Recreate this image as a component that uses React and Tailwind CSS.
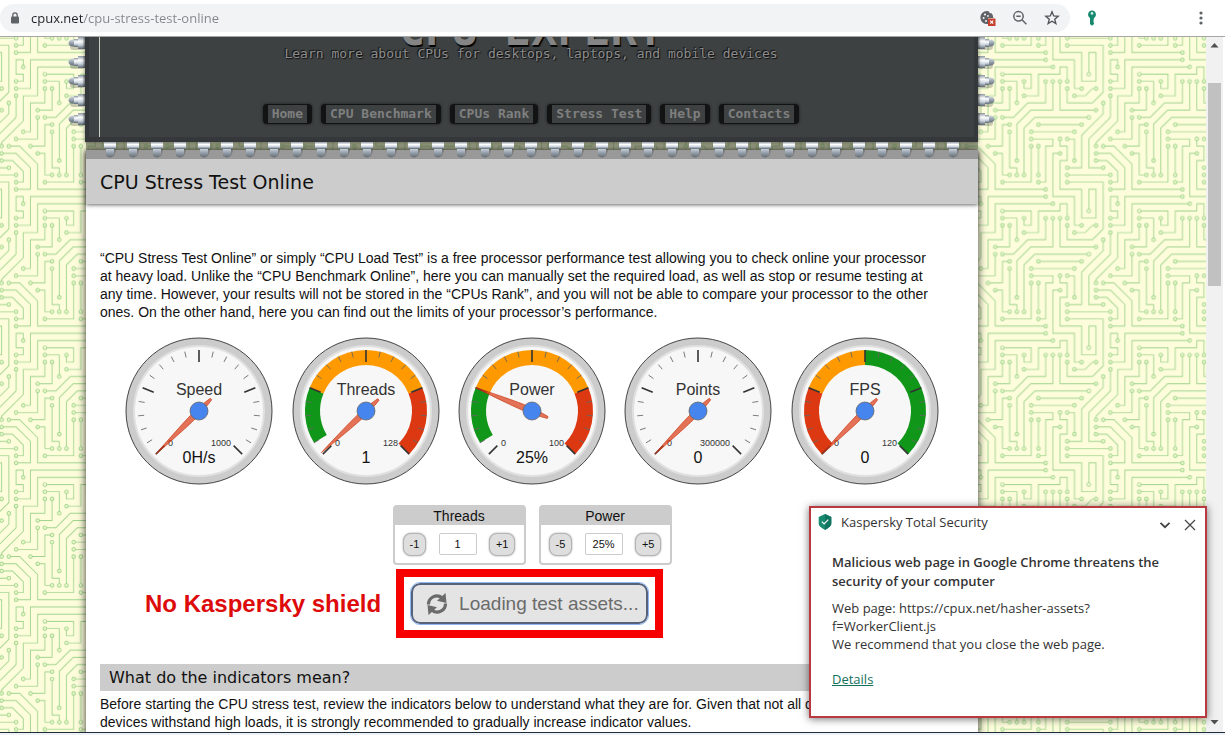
import React from 'react';

const CIRCUIT =
  'M44.1 224a5 5 0 1 1 0 2H0v-2h44.1zm160 48a5 5 0 1 1 0 2H82v-2h122.1zm57.8-46a5 5 0 1 1 0-2H304v2h-42.1zm0 16a5 5 0 1 1 0-2H304v2h-42.1zm6.2-114a5 5 0 1 1 0 2h-86.2a5 5 0 1 1 0-2h86.2zm-256-48a5 5 0 1 1 0 2H0v-2h12.1zm185.8 34a5 5 0 1 1 0-2h86.2a5 5 0 1 1 0 2h-86.2zM258 12.1a5 5 0 1 1-2 0V0h2v12.1zm-64 208a5 5 0 1 1-2 0v-54.2a5 5 0 1 1 2 0v54.2zm48-198.2V80h62v2h-64V21.9a5 5 0 1 1 2 0zm16 16V64h46v2h-48V37.9a5 5 0 1 1 2 0zm-128 96V208h16v12.1a5 5 0 1 1-2 0V210h-16v-76.1a5 5 0 1 1 2 0zm-5.9-21.9a5 5 0 1 1 0 2H114v48H85.9a5 5 0 1 1 0-2H112v-48h12.1zm-6.2 130a5 5 0 1 1 0-2H176v-74.1a5 5 0 1 1 2 0V242h-60.1zm-16-64a5 5 0 1 1 0-2H114v48h10.1a5 5 0 1 1 0 2H112v-48h-10.1zM66 284.1a5 5 0 1 1-2 0V274H50v30h-2v-32h18v12.1zM236.1 176a5 5 0 1 1 0 2H226v94h48v32h-2v-30h-48v-98h12.1zm25.8-30a5 5 0 1 1 0-2H274v44.1a5 5 0 1 1-2 0V146h-10.1zm-64 96a5 5 0 1 1 0-2H208v-80h16v-14h-42.1a5 5 0 1 1 0-2H226v18h-16v80h-12.1zm86.2-210a5 5 0 1 1 0 2H272V0h2v32h10.1zM98 101.9V146H53.9a5 5 0 1 1 0-2H96v-42.1a5 5 0 1 1 2 0zM53.9 34a5 5 0 1 1 0-2H80V0h2v34H53.9zm60.1 3.9V66H82v64H69.9a5 5 0 1 1 0-2H80V64h32V37.9a5 5 0 1 1 2 0zM101.9 82a5 5 0 1 1 0-2H128V37.9a5 5 0 1 1 2 0V82h-28.1zm16-64a5 5 0 1 1 0-2H146v44.1a5 5 0 1 1-2 0V18h-26.1zm102.2 270a5 5 0 1 1 0 2H98v14h-2v-16h124.1zM242 149.9V160h16v34h-16v62h48v48h-2v-46h-48v-66h16v-30h-16v-12.1a5 5 0 1 1 2 0zM53.9 18a5 5 0 1 1 0-2H64V2H48V0h18v18H53.9zm112 32a5 5 0 1 1 0-2H192V0h50v2h-48v48h-28.1zm-48-48a5 5 0 0 1-9.8-2h2.07a3 3 0 1 0 5.66 0H178v34h-18V21.9a5 5 0 1 1 2 0V32h14V2h-58.1zm0 96a5 5 0 1 1 0-2H137l32-32h39V21.9a5 5 0 1 1 2 0V66h-40.17l-32 32H117.9zm28.1 90.1a5 5 0 1 1-2 0v-76.51L175.59 80H224V21.9a5 5 0 1 1 2 0V82h-49.59L146 112.41v75.69zm16 32a5 5 0 1 1-2 0v-99.51L184.59 96H300.1a5 5 0 0 1 3.9-3.9v2.07a3 3 0 0 0 0 5.66v2.07a5 5 0 0 1-3.9-3.9H185.41L162 121.41v98.69zm-144-64a5 5 0 1 1-2 0v-3.51l48-48V48h32V0h2v50H66v55.41l-48 48v2.69zM50 53.9v43.51l-48 48V208h26.1a5 5 0 1 1 0 2H0v-65.41l48-48V53.9a5 5 0 1 1 2 0zm-16 16V89.41l-34 34v-2.82l32-32V69.9a5 5 0 1 1 2 0zM12.1 32a5 5 0 1 1 0 2H9.41L0 43.41V40.6L8.59 32h3.51zm265.8 18a5 5 0 1 1 0-2h18.69l7.41-7.41v2.82L297.41 50H277.9zm-16 160a5 5 0 1 1 0-2H288v-71.41l16-16v2.82l-14 14V210h-28.1zm-208 32a5 5 0 1 1 0-2H64v-22.59L40.59 194H21.9a5 5 0 1 1 0-2H41.41L66 216.59V242H53.9zm150.2 14a5 5 0 1 1 0 2H96v-56.6L56.6 162H37.9a5 5 0 1 1 0-2h19.5L98 200.6V256h106.1zm-150.2 2a5 5 0 1 1 0-2H80v-46.59L48.59 178H21.9a5 5 0 1 1 0-2H49.41L82 208.59V258H53.9zM34 39.8v1.61L9.41 66H0v-2h8.59L32 40.59V0h2v39.8zM2 300.1a5 5 0 0 1 3.9 3.9H3.83A3 3 0 0 0 0 302.17V256h18v48h-2v-46H2v42.1zM34 241v63h-2v-62H0v-2h34v1zM17 18H0v-2h16V0h2v18h-1zm273-2h14v2h-16V0h2v16zm-32 273v15h-2v-14h-14v14h-2v-16h18v1zM0 92.1A5.02 5.02 0 0 1 6 97a5 5 0 0 1-6 4.9v-2.07a3 3 0 1 0 0-5.66V92.1zM80 272h2v32h-2v-32zm37.9 32h-2.07a3 3 0 0 0-5.66 0h-2.07a5 5 0 0 1 9.8 0zM5.9 0A5.02 5.02 0 0 1 0 5.9V3.83A3 3 0 0 0 3.83 0H5.9zm294.2 0h2.07A3 3 0 0 0 304 3.83V5.9a5 5 0 0 1-3.9-5.9zm3.9 300.1v2.07a3 3 0 0 0-1.83 1.83h-2.07a5 5 0 0 1 3.9-3.9z';

// Column/row of every solder pad on the 19 x 19 board grid.
const PADS = [
  [3, 14], [13, 17], [16, 14], [16, 15], [17, 8], [11, 8], [1, 5], [12, 7], [18, 7], [16, 1], [12, 14], [12, 10],
  [15, 1], [16, 2], [8, 8], [9, 14], [8, 7], [5, 10], [7, 15], [11, 10], [6, 11], [8, 14], [4, 18], [15, 11],
  [16, 9], [17, 12], [12, 15], [11, 9], [18, 2], [6, 6], [3, 9], [3, 2], [7, 2], [4, 8], [6, 5], [8, 2], [7, 1],
  [9, 4], [14, 18], [15, 9], [3, 1], [10, 3], [10, 1], [7, 6], [13, 1], [9, 12], [14, 1], [10, 14], [1, 10],
  [3, 3], [2, 13], [2, 4], [1, 2], [17, 3], [16, 13], [3, 15], [1, 12], [13, 16], [2, 10], [3, 16], [1, 11],
];

function CircuitBackground() {
  return (
    <svg className="absolute inset-0 h-full w-full" aria-hidden="true">
      <defs>
        <pattern
          id="circuit"
          width="304"
          height="304"
          patternUnits="userSpaceOnUse"
          patternTransform="translate(-6 36.7) scale(0.45)"
        >
          <path d={CIRCUIT} fill="#9fd38d" />
          {PADS.map(([c, r]) => (
            <circle key={c + '-' + r} cx={c * 16 + 1} cy={r * 16 + 1} r="3" fill="#e9f8c8" />
          ))}
        </pattern>
      </defs>
      <rect width="100%" height="100%" fill="#fdfddc" />
      <rect width="100%" height="100%" fill="url(#circuit)" />
    </svg>
  );
}

function Toolbar() {
  return (
    <header className="flex h-[37px] shrink-0 items-center border-b border-[#a6a6a6] bg-white font-['Open_Sans','Noto_Sans',sans-serif]">
      <div className="flex h-7 flex-1 items-center rounded-full bg-[#f1f3f4] pl-2.5 pr-2.5">
        <svg className="h-3 w-[10px]" viewBox="0 0 10 12" aria-hidden="true">
          <rect x="1" y="4.5" width="8" height="7" rx="1" fill="#5f6368" />
          <path d="M2.8 5V3a2.2 2.2 0 0 1 4.4 0v2" fill="none" stroke="#5f6368" strokeWidth="1.3" />
        </svg>
        <input
          aria-label="Address"
          className="ml-[11px] h-6 flex-1 bg-[linear-gradient(90deg,#202124_52px,#80868b_52px)] bg-clip-text text-[13px] text-transparent outline-none"
          defaultValue="cpux.net/cpu-stress-test-online"
        />
        <div className="flex items-center gap-4">
          <button aria-label="Cookies blocked" className="block">
            <svg className="h-4 w-4" viewBox="0 0 16 16">
              <path d="M7 1a6.5 6.5 0 1 0 1 12.9V8h5.4A6.5 6.5 0 0 0 11.5 3.3 2.2 2.2 0 0 1 9 1.4 6.5 6.5 0 0 0 7 1z" fill="#5f6368" />
              <circle cx="5" cy="4.5" r="1.1" fill="#f1f3f4" />
              <circle cx="3.6" cy="8" r="1" fill="#f1f3f4" />
              <circle cx="8" cy="6" r="0.9" fill="#f1f3f4" />
              <circle cx="6" cy="11" r="1" fill="#f1f3f4" />
              <rect x="8" y="8.5" width="7.5" height="7.5" fill="#c5402f" />
              <path d="M10.2 10.7l3 3m0-3l-3 3" stroke="#fff" strokeWidth="1.1" />
            </svg>
          </button>
          <button aria-label="Zoom" className="block">
            <svg className="h-4 w-4" viewBox="0 0 16 16" fill="none" stroke="#5f6368" strokeWidth="1.5">
              <circle cx="6.5" cy="6.3" r="4.7" />
              <path d="M10 9.8l4.400 4.400M4.300 6.300h4.400" />
            </svg>
          </button>
          <button aria-label="Bookmark this page" className="block">
            <svg className="h-4 w-4" viewBox="0 0 16 16" fill="none" stroke="#4f5357" strokeWidth="1.3">
              <path d="M8 1.8l1.700 4.200 4.500.3-3.500 2.900 1.200 4.400L8 11.200l-3.900 2.400 1.200-4.400L1.800 6.300l4.500-.3z" />
            </svg>
          </button>
        </div>
      </div>
      <div className="flex w-[155px] items-center justify-between pl-4 pr-4">
        <button aria-label="Password manager" className="block">
          <svg className="h-4 w-3" viewBox="0 0 12 16">
            <path d="M6 .5a4 4 0 0 0-2 7.4V14l2 1.7L8 14v-1.200l-.8-.8.8-1-.8-1 .8-1V7.900A4 4 0 0 0 6 .5z" fill="#16896f" />
            <circle cx="6" cy="3.400" r="1.300" fill="#d5eee7" />
          </svg>
        </button>
        <button aria-label="Chrome menu" className="block">
          <svg className="h-4 w-4" viewBox="0 0 16 16" fill="#5f6368">
            <circle cx="8" cy="3" r="1.6" />
            <circle cx="8" cy="8" r="1.6" />
            <circle cx="8" cy="13" r="1.6" />
          </svg>
        </button>
      </div>
    </header>
  );
}

function PinGradients() {
  return (
    <svg className="absolute h-0 w-0" aria-hidden="true">
      <defs>
        <linearGradient id="metal" x1="0" y1="0" x2="0" y2="1">
          <stop offset="0" stopColor="#8d98a4" />
          <stop offset="0.35" stopColor="#ffffff" />
          <stop offset="0.65" stopColor="#cdd6e0" />
          <stop offset="1" stopColor="#5b6672" />
        </linearGradient>
        <linearGradient id="tip" x1="0" y1="0" x2="0" y2="1">
          <stop offset="0" stopColor="#d3dbe2" />
          <stop offset="0.5" stopColor="#98a3ae" />
          <stop offset="1" stopColor="#66717c" />
        </linearGradient>
      </defs>
    </svg>
  );
}

const SIDE_PINS = [1, 2, 3, 4, 5];

function SidePins({ mirrored }) {
  return (
    <div className="flex w-[17px] flex-col gap-[6px]">
      {SIDE_PINS.map((n) => (
        <svg key={n} className={mirrored ? 'h-[13px] w-[17px] -scale-x-100' : 'h-[13px] w-[17px]'} viewBox="0 0 17 13" aria-hidden="true">
          <rect x="2" y="3" width="15" height="10" rx="3" fill="#000" opacity="0.2" />
          <path d="M8 2.500H4Q.5 3.500.5 6T4 9.500h4z" fill="url(#tip)" />
          <path d="M6 2h5v8H6z" fill="url(#metal)" />
          <path d="M10 0h7v12h-7z" fill="url(#metal)" />
          <path d="M15.500 0H17v12h-1.500z" fill="#3c434a" opacity="0.4" />
        </svg>
      ))}
    </div>
  );
}

const BOTTOM_PINS = Array.from({ length: 37 }, (_, i) => i);

function BottomPins() {
  return (
    <div className="relative z-10 h-2 bg-[#4a4f3c]/50">
      <div className="flex justify-between pl-[17px] pr-[18px]">
        {BOTTOM_PINS.map((n) => (
          <svg key={n} className="h-4 w-[14px] shrink-0" viewBox="0 0 14 16" aria-hidden="true">
            <path d="M3 6h9l1 3-2 5-4 2-4-2z" fill="#000" opacity="0.18" />
            <path d="M3 6h8v6Q10 15 7 15T3 12z" fill="url(#tip)" />
            <path d="M1 0h12v5.500l-1 1.500H2L1 5.500z" fill="url(#metal)" />
          </svg>
        ))}
      </div>
    </div>
  );
}

const NAV = ['Home', 'CPU Benchmark', 'CPUs Rank', 'Stress Test', 'Help', 'Contacts'];

function Chip() {
  return (
    <div className="flex h-[105px] pl-[68px] pr-[211px]">
      <SidePins />
      <div className="relative z-10 flex flex-1 border-b-[5px] border-l-4 border-r-4 border-[#34383a] bg-[#3d4142] font-['DejaVu_Sans_Mono',monospace] text-[#8d8d8d] shadow-[0_1px_4px_rgba(0,0,0,0.5)]">
        <div className="w-[11px] border-r border-[#c9ccc4]" />
        <div className="flex flex-1 flex-col items-center pr-3">
          <div className="flex h-[10px] items-end overflow-hidden">
            <p className="text-[44px]/[34px] font-bold text-[#858585] [text-shadow:1px_2px_1px_#000]">CPU EXPERT</p>
          </div>
          <p className="text-[13px]/[14px] [text-shadow:-1px_-1px_1px_#111,1px_1px_1px_#111]">
            Learn more about CPUs for desktops, laptops, and mobile devices
          </p>
          <nav className="mt-[43px] flex gap-[9px]">
            {NAV.map((item) => (
              <a
                key={item}
                href="#"
                className="block h-5 rounded border-x-[5px] border-y border-[#121414] bg-[#3d4142] px-1 text-[13px]/[18px] font-bold text-[#7f7f7f] shadow-[0_0_3px_rgba(0,0,0,0.6)]"
              >
                {item}
              </a>
            ))}
          </nav>
        </div>
      </div>
      <SidePins mirrored />
    </div>
  );
}

const GREEN = '#109618';
const ORANGE = '#ff9900';
const RED = '#dc3912';

const LOAD_BANDS = [
  [-121.5, -67.5, GREEN],
  [-67.5, 67.5, ORANGE],
  [67.5, 135, RED],
];

const GAUGES = [
  { name: 'Speed', value: '0H/s', max: '1000', angle: -135, bands: [] },
  { name: 'Threads', value: '1', max: '128', angle: -133, bands: LOAD_BANDS },
  { name: 'Power', value: '25%', max: '100', angle: -67.5, bands: LOAD_BANDS },
  { name: 'Points', value: '0', max: '300000', angle: -135, bands: [] },
  {
    name: 'FPS',
    value: '0',
    max: '120',
    angle: -135,
    bands: [
      [-135, -67.5, RED],
      [-67.5, 0, ORANGE],
      [0, 135, GREEN],
    ],
  },
];

const TICKS = Array.from({ length: 21 }, (_, i) => i);

function polar(r, deg) {
  const a = (deg * Math.PI) / 180;
  return (r * Math.sin(a)).toFixed(2) + ' ' + (-r * Math.cos(a)).toFixed(2);
}

function bandPath(from, to) {
  const big = to - from > 180 ? 1 : 0;
  return `M${polar(61, from)}A61 61 0 ${big} 1 ${polar(61, to)}L${polar(46, to)}A46 46 0 ${big} 0 ${polar(46, from)}Z`;
}

function Gauge({ gauge }) {
  return (
    <svg className="h-[148px] w-[148px]" viewBox="-74 -74 148 148" fontFamily="Liberation Sans, Arial, sans-serif">
      <circle r="73" fill="#ccc" stroke="#333" strokeWidth="0.9" />
      <circle r="65" fill="#f7f7f7" stroke="#e0e0e0" strokeWidth="2" />
      {gauge.bands.map(([from, to, color]) => (
        <path key={from} d={bandPath(from, to)} fill={color} />
      ))}
      {TICKS.map((i) => {
        const major = i % 5 === 0;
        return (
          <path
            key={i}
            d={`M0-61V${major ? -49 : -55}`}
            transform={`rotate(${-135 + i * 13.5})`}
            stroke={major ? '#333' : '#666'}
            strokeWidth={major ? 1.6 : 0.8}
          />
        );
      })}
      <text y="-16" textAnchor="middle" fontSize="16" fill="#333">{gauge.name}</text>
      <text x="-31" y="35" fontSize="9" fill="#333">0</text>
      <text x="32" y="35" textAnchor="end" fontSize="9" fill="#333">{gauge.max}</text>
      <text y="52" textAnchor="middle" fontSize="16" fill="#111">{gauge.value}</text>
      <path
        d="M0-61Q.8-54 2.600-20L2.900-10Q2.600 8 1 17H-1Q-2.600 8-2.900-10L-2.600-20Q-.8-54 0-61Z"
        transform={`rotate(${gauge.angle})`}
        fill="#dc3912"
        fillOpacity="0.7"
        stroke="#c63310"
        strokeWidth="0.6"
      />
      <circle r="9" fill="#4684ee" stroke="#666" strokeWidth="0.8" />
    </svg>
  );
}

function Stepper({ label, value, down, up }) {
  const id = label.toLowerCase();
  const step =
    'h-[23px] rounded-lg border border-[#b4b4b4] bg-[#dedede] px-[6px] text-[11px] shadow-[0_0_2px_rgba(0,0,0,0.4)]';
  return (
    <div className="w-[133px] rounded border-2 border-[#ccc] bg-white">
      <label htmlFor={id} className="block bg-[#ccc] text-center text-[14px]/[18px]">{label}</label>
      <div className="flex h-[38px] items-center justify-between px-2">
        <button className={step}>{down}</button>
        <input
          id={id}
          defaultValue={value}
          className="h-[22px] w-[38px] rounded-xs border border-[#ccc] bg-white text-center text-[11px]"
        />
        <button className={step}>{up}</button>
      </div>
    </div>
  );
}

function Article() {
  return (
    <main className="bg-white font-['Liberation_Sans',Arial,sans-serif] text-[14px]/[18px] text-[#111] shadow-[0_0_8px_rgba(0,0,0,0.8)]">
      <h1 className="flex h-[54px] items-center border-t-[9px] border-[#999] bg-[#ccc] px-[14px] font-['DejaVu_Sans',sans-serif] text-[19px] shadow-[0_1px_4px_rgba(0,0,0,0.6)]">
        CPU Stress Test Online
      </h1>
      <div className="px-[14px] pt-[45px]">
        <p className="pr-7">
          “CPU Stress Test Online” or simply “CPU Load Test” is a free processor performance test allowing you to check online your processor at heavy load. Unlike the “CPU Benchmark Online”, here you can manually set the required load, as well as stop or resume testing at any time. However, your results will not be stored in the “CPUs Rank”, and you will not be able to compare your processor to the other ones. On the other hand, here you can find out the limits of your processor’s performance.
        </p>
        <div className="mt-4 grid grid-cols-5 justify-items-center px-4">
          {GAUGES.map((g) => (
            <Gauge key={g.name} gauge={g} />
          ))}
        </div>
        <div className="mt-5 flex justify-center gap-[13px]">
          <Stepper label="Threads" value="1" down="-1" up="+1" />
          <Stepper label="Power" value="25%" down="-5" up="+5" />
        </div>
        <div className="mt-1 flex items-center gap-[15px] pl-[45px]">
          <p className="text-2xl font-bold text-[#dd0b0b]">No Kaspersky shield</p>
          <div className="flex h-[69px] w-[267px] items-center justify-center border-8 border-[#f60000]">
            <button className="flex h-[41px] w-[237px] items-center gap-2.5 rounded-[9px] border-2 border-[#56617a] bg-[#e4e4e4] pl-3 text-[19px] text-[#6b6b6b] outline-1 outline-[#8fb6f0]">
              <svg className="h-6 w-6" viewBox="0 0 24 24" aria-hidden="true">
                <g fill="none" stroke="#6b6b6b" strokeWidth="3.200">
                  <path d="M3.500 12.500A8.300 8.300 0 0 1 17 5.800" />
                  <path d="M20.500 11.500A8.300 8.300 0 0 1 7 18.200" />
                </g>
                <path d="M20.500 1l1 10-9.500-2.200z" fill="#6b6b6b" />
                <path d="M3.500 23l-1-10 9.500 2.200z" fill="#6b6b6b" />
              </svg>
              Loading test assets...
            </button>
          </div>
        </div>
        <h2 className="mt-[26px] bg-[#ccc] px-[9px] font-['DejaVu_Sans',sans-serif] text-[16px]/[27px]">
          What do the indicators mean?
        </h2>
        <p className="mt-1 pr-7">
          Before starting the CPU stress test, review the indicators below to understand what they are for. Given that not all desktop and mobile devices withstand high loads, it is strongly recommended to gradually increase indicator values.
        </p>
      </div>
      <div className="h-10" />
    </main>
  );
}

function Scrollbar() {
  return (
    <div className="flex w-[17px] shrink-0 flex-col items-center bg-[#f1f1f1]">
      <svg className="my-[6px] h-[5px] w-[9px]" viewBox="0 0 9 5" aria-hidden="true">
        <path d="M4.500 0L8.500 4.500H.5z" fill="#505050" />
      </svg>
      <div className="mt-[29px] h-[203px] w-[13px] bg-[#c1c1c1]" />
      <div className="flex-1" />
      <svg className="my-[7px] h-[5px] w-[9px]" viewBox="0 0 9 5" aria-hidden="true">
        <path d="M4.500 4.500L.5 0h8z" fill="#505050" />
      </svg>
    </div>
  );
}

function Notification() {
  return (
    <section
      role="alert"
      className="absolute bottom-[17px] right-[18px] z-20 h-[212px] w-[398px] border-2 border-[#b8393f] bg-white font-['Open_Sans','Noto_Sans',sans-serif] text-[13px]/[18px] text-[#333] shadow-[0_1px_8px_rgba(0,0,0,0.55)]"
    >
      <div className="flex items-center pl-[7px] pr-[9px] pt-[5px]">
        <svg className="h-4 w-[14px]" viewBox="0 0 14 16" aria-hidden="true">
          <path d="M7 0l6.300 3v6.800Q13.300 12.500 7 16 .7 12.500.7 9.800V3z" fill="#16896f" />
          <path d="M7 0l6.300 3v6.800Q13.300 12.500 7 16z" fill="#0f7560" />
          <path d="M3.800 7.700l2.300 2.300 4.200-4.300" fill="none" stroke="#fff" strokeWidth="1.1" />
        </svg>
        <p className="ml-[9px] flex-1">Kaspersky Total Security</p>
        <div className="flex items-center gap-[13px] pt-[5px]">
          <button aria-label="Collapse" className="block">
            <svg className="h-3 w-3" viewBox="0 0 12 12" fill="none" stroke="#444" strokeWidth="1.8">
              <path d="M1.500 3.800L6 8.200l4.500-4.400" />
            </svg>
          </button>
          <button aria-label="Close" className="block">
            <svg className="h-3 w-3" viewBox="0 0 12 12" fill="none" stroke="#444" strokeWidth="1.2">
              <path d="M1 1l10 10M11 1L1 11" />
            </svg>
          </button>
        </div>
      </div>
      <div className="pl-[21px] pr-7 pt-[22px]">
        <h3 className="text-[13px]/[19px] font-semibold">Malicious web page in Google Chrome threatens the security of your computer</h3>
        <p className="mt-2">
          Web page: https://cpux.net/hasher-assets?
          <br />
          f=WorkerClient.js
          <br />
          We recommend that you close the web page.
        </p>
        <a href="#" className="mt-[17px] inline-block text-[#12705c] underline">Details</a>
      </div>
    </section>
  );
}

export default function App() {
  return (
    <div className="relative flex h-screen flex-col overflow-hidden bg-white">
      <Toolbar />
      <div className="flex min-h-0 flex-1 pr-0.5">
        <div className="relative min-w-0 flex-1 overflow-hidden">
          <CircuitBackground />
          <div className="relative">
            <PinGradients />
            <Chip />
            <div className="pl-[86px] pr-[228px]">
              <BottomPins />
              <Article />
            </div>
          </div>
        </div>
        <Scrollbar />
      </div>
      <div className="h-[3px] shrink-0 border-t border-[#1f2c3a] bg-[#eef2f6]" />
      <Notification />
    </div>
  );
}
